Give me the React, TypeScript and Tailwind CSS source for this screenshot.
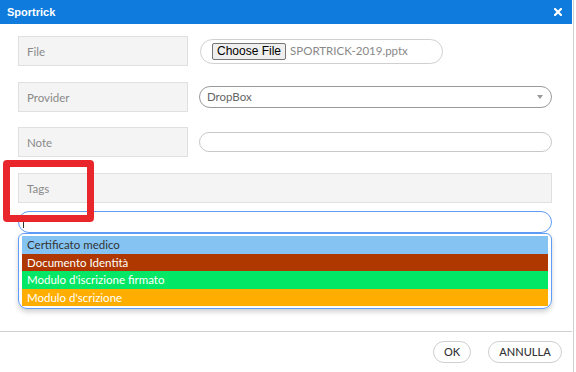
import React from "react";

const font = { fontFamily: "Lato, 'Open Sans', sans-serif" };

function LabelBox({ text, className = "" }: { text: string; className?: string }) {
  return (
    <div
      className={`h-[30px] bg-[#f4f4f4] border border-[#e0e0e0] px-[8px] pt-[6px] text-[11.5px] text-[#8a8a8a] ${className}`}
    >
      {text}
    </div>
  );
}

const tags = [
  { name: "Certificato medico", bg: "bg-[#85c4f2]", fg: "text-[#333]" },
  { name: "Documento Identità", bg: "bg-[#ae3800]", fg: "text-white" },
  { name: "Modulo d'iscrizione firmato", bg: "bg-[#03e766]", fg: "text-white" },
  { name: "Modulo d'scrizione", bg: "bg-[#ffae00]", fg: "text-white" },
];

export default function App() {
  return (
    <div className="w-[576px] h-[372px] bg-white flex relative overflow-hidden" style={font}>
      <div className="w-[573px] flex flex-col">
        {/* HEADER */}
        <div className="h-6 bg-[#0e7bdd] flex items-center justify-between pl-[7px] pr-[10px] w-[572px]">
          <span className="text-white text-[11px] font-bold font-['Liberation_Sans',sans-serif]">
            Sportrick
          </span>
          <svg width="8" height="8" viewBox="0 0 8 8">
            <path d="M1 1 L7 7 M7 1 L1 7" stroke="white" strokeWidth="2.2" strokeLinecap="square" />
          </svg>
        </div>

        {/* BODY */}
        <div className="flex-1 pl-[18px] pr-[21px] pt-3 flex flex-col">
          {/* File */}
          <div className="flex items-center gap-3">
            <LabelBox text="File" className="w-[170px]" />
            <div className="w-[243px] h-[25px] rounded-full border border-[#d0d0d0] flex items-center pl-[11px] gap-[4px]">
              <button className="h-[17px] px-[4px] bg-[#efefef] border border-[#767676] rounded-[2px] text-[12px] leading-none text-black font-['Liberation_Sans',sans-serif]">
                Choose File
              </button>
              <span className="text-[11.5px] text-[#888]">SPORTRICK-2019.pptx</span>
            </div>
          </div>

          {/* Provider */}
          <div className="flex items-center gap-[11px] mt-4">
            <LabelBox text="Provider" className="w-[170px]" />
            <div className="flex-1 h-[22px] rounded-full border border-[#9a9a9a] flex items-center justify-between pl-[7px] pr-[8px]">
              <span className="text-[11.5px] text-[#666]">DropBox</span>
              <svg width="6" height="4" viewBox="0 0 6 4">
                <path d="M0 0 L6 0 L3 4 Z" fill="#999" />
              </svg>
            </div>
          </div>

          {/* Note */}
          <div className="flex items-center gap-[11px] mt-[15px]">
            <LabelBox text="Note" className="w-[170px]" />
            <div className="flex-1 h-[20px] rounded-full border border-[#c8c8c8]" />
          </div>

          {/* Tags */}
          <LabelBox text="Tags" className="mt-4" />

          <div className="mt-2 h-[22px] rounded-[11px] border border-[#5e9cf7] flex items-center pl-[4px]">
            <div className="w-px h-[12px] bg-[#333]" />
          </div>
          <div className="h-[76px] rounded-b-[9px] rounded-t-[6px] border border-[#5e9cf7] shadow-[0_3px_5px_rgba(0,0,0,0.18)] px-[3px] pt-[2px]">
            {tags.map((t) => (
              <div key={t.name} className={`h-[17.5px] ${t.bg} ${t.fg} text-[11.5px] leading-[17px] pl-[5px]`}>
                {t.name}
              </div>
            ))}
          </div>
        </div>

        {/* FOOTER */}
        <div className="h-[41px] border-t border-[#cfcfcf] flex items-center justify-end gap-[17px] pr-[10px] w-[572px]">
          <button className="h-[22px] w-[38px] rounded-full border border-[#cfcfcf] text-[11px] text-[#333] font-medium">
            OK
          </button>
          <button className="h-[22px] w-[74px] rounded-full border border-[#cfcfcf] text-[11px] text-[#333] font-medium">
            ANNULLA
          </button>
        </div>
      </div>
      <div className="w-px bg-[#cfcfcf]" />

      {/* annotation */}
      <div className="absolute left-[3px] top-[160px] w-[91px] h-[62px] border-[7px] border-[#e8262b] rounded-[4px]" />
    </div>
  );
}
